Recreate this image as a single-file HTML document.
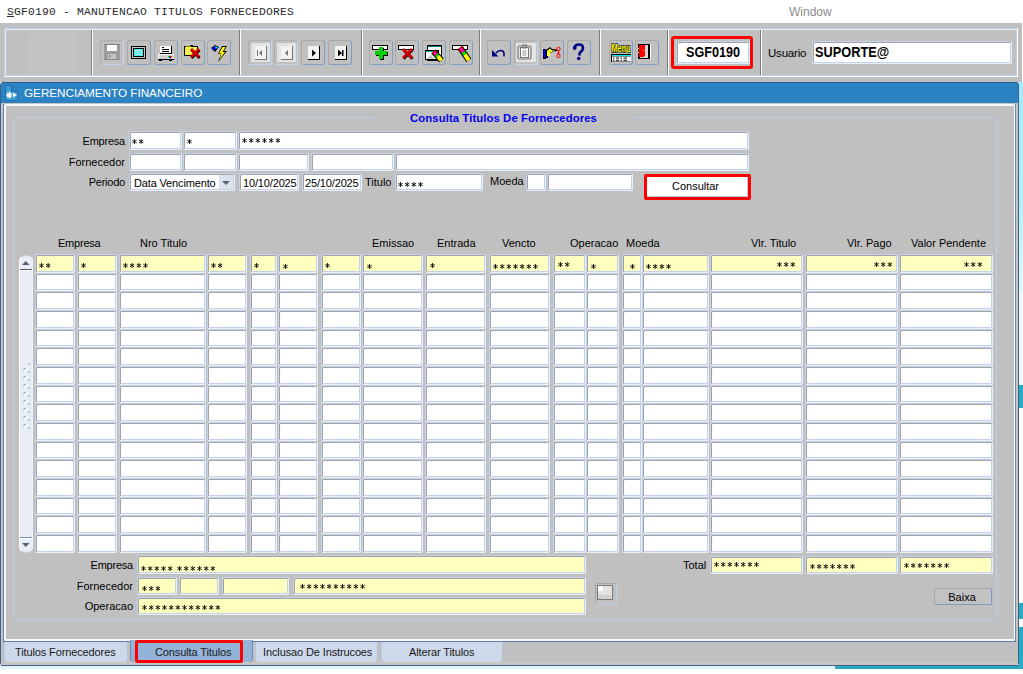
<!DOCTYPE html><html><head><meta charset="utf-8"><style>
*{margin:0;padding:0;box-sizing:border-box}
html,body{width:1023px;height:674px;overflow:hidden;background:#fff;position:relative}
div,svg{position:absolute}
.t{font-family:"Liberation Sans",sans-serif;font-size:11px;color:#000;white-space:nowrap;line-height:13px}
.s{overflow:visible}
.f{background:#fff;border-style:solid;border-width:1px;border-color:#c3d3eb #e9eef7 #e9eef7 #c3d3eb;border-radius:2px;box-shadow:inset 1px 1px 0 #a3a3a3,inset -1px -1px 0 #c3d3eb}
.f.y{background:#ffffc0}
.tb{width:24px;height:25px;border:1px solid;border-color:#a8a8a8 #7f9fc6 #7f9fc6 #a8a8a8;border-radius:3px}
.tb.dis{border-color:#adadad #c2d4ee #c2d4ee #adadad}
.sep{width:2px;background:linear-gradient(90deg,#7c7c7c 0,#7c7c7c 1px,#fff 1px,#fff 2px)}
.btn{border:1px solid;border-color:#a6a6a6 #7f9cc0 #7f9cc0 #a6a6a6;border-radius:2px;background:#c2c2c2}
</style></head><body>
<svg width="0" height="0" style="position:absolute"><defs><g id="ast"><path d="M2.5 0 V5 M0.3 1.2 L4.7 3.8 M0.3 3.8 L4.7 1.2" stroke="#000" stroke-width="0.85" fill="none"/></g></defs></svg>
<div class="t" style="left:7px;top:5px;font-family:'Liberation Mono',monospace;font-size:11.3px;letter-spacing:0.22px;line-height:14px;color:#2a2a2a"><u>S</u>GF0190 - MANUTENCAO TITULOS FORNECEDORES</div>
<div class="t" style="left:789px;top:5px;font-size:12px;color:#8c8c8c;line-height:14px">Window</div>
<div style="left:0px;top:23px;width:1022px;height:59px;background:#c0c0c0"></div>
<div style="left:4px;top:28px;width:1014px;height:49px;border-style:solid;border-width:1px;border-color:#bcd0ec #fff #fff #bcd0ec"></div>
<div style="left:5px;top:29px;width:1012px;height:47px;border-style:solid;border-width:1px;border-color:#e8eef8 #bcd0ec #bcd0ec #e8eef8"></div>
<div style="left:28px;top:33px;width:49px;height:42px;background:#c3c3c3"></div>
<div class="sep" style="left:91px;top:30px;height:45px"></div>
<div class="sep" style="left:239px;top:30px;height:45px"></div>
<div class="sep" style="left:361px;top:30px;height:45px"></div>
<div class="sep" style="left:479px;top:30px;height:45px"></div>
<div class="sep" style="left:599px;top:30px;height:45px"></div>
<div class="sep" style="left:667px;top:30px;height:45px"></div>
<div class="sep" style="left:760px;top:30px;height:45px"></div>
<div class="tb dis" style="left:100px;top:40px"><svg style="left:-1px;top:-1px" width="24" height="25" shape-rendering="crispEdges"><rect x="4" y="4" width="16" height="16" fill="#9c9c9c"/><rect x="5" y="4" width="14" height="1" fill="#7d7d7d"/><rect x="7" y="5" width="10" height="6" fill="#fff"/><rect x="8" y="14" width="8" height="6" fill="#c2c2c2"/><rect x="9" y="15" width="2" height="3" fill="#9c9c9c"/><rect x="4" y="19" width="16" height="1" fill="#8a8a8a"/></svg></div>
<div class="tb" style="left:127px;top:40px"><svg style="left:-1px;top:-1px" width="24" height="25" shape-rendering="crispEdges"><rect x="4" y="6" width="15" height="13" fill="#000"/><rect x="5" y="7" width="13" height="11" fill="#c8c8c8"/><rect x="6" y="8" width="11" height="9" fill="#000"/><rect x="7" y="9" width="9" height="7" fill="#3ef0f0"/><rect x="8" y="10" width="7" height="1" fill="#b8e8e8"/><rect x="8" y="12" width="7" height="1" fill="#b8e8e8"/><rect x="8" y="14" width="7" height="1" fill="#b8e8e8"/></svg></div>
<div class="tb" style="left:154px;top:40px"><svg style="left:-1px;top:-1px" width="24" height="25" shape-rendering="crispEdges"><rect x="6" y="6" width="12" height="8" fill="#000"/><rect x="6" y="6" width="11" height="7" fill="#fff"/><rect x="8" y="7" width="2" height="1" fill="#000"/><rect x="8" y="9" width="7" height="1" fill="#000"/><rect x="8" y="11" width="7" height="1" fill="#000"/><rect x="4" y="14" width="16" height="6" fill="#fff"/><rect x="5" y="15" width="15" height="4" fill="#d0d0d0"/><rect x="14" y="16" width="2" height="1" fill="#0c0"/><rect x="16" y="16" width="2" height="1" fill="#e00"/><rect x="18" y="16" width="1" height="1" fill="#ee0"/><rect x="15" y="17" width="2" height="1" fill="#00f"/><rect x="4" y="19" width="16" height="1" fill="#000"/><rect x="5" y="20" width="3" height="1" fill="#000"/><rect x="15" y="20" width="3" height="1" fill="#000"/></svg></div>
<div class="tb" style="left:181px;top:40px"><svg style="left:-1px;top:-1px" width="24" height="25" shape-rendering="crispEdges"><path d="M3 6 H8 L9 5 H11 L12 6 H17 V16 H3 Z" fill="#000"/><rect x="4" y="7" width="12" height="8" fill="#f2f24a"/><rect x="5" y="6" width="5" height="1" fill="#8a8a00"/></svg><svg style="left:-1px;top:-1px" width="24" height="25"><path d="M9 10 L11 8 L14 11 L17 8 L19 10 L16 13 L19 16 L17 18 L14 15 L11 18 L9 16 L12 13 Z" fill="#000" transform="translate(0.6,1)"/><path d="M9 10 L11 8 L14 11 L17 8 L19 10 L16 13 L19 16 L17 18 L14 15 L11 18 L9 16 L12 13 Z" fill="#d40000"/></svg></div>
<div class="tb" style="left:207px;top:40px"><svg style="left:-1px;top:-1px" width="24" height="25"><path d="M4 8 L8 5 L12 7 L8 12 Z" fill="#000"/><path d="M5 8 L8 6 L10 7 L7 11 Z" fill="#0000f0"/><path d="M8 6 L11 7 L9 9 Z" fill="#00e8f0"/><path d="M15 6 H20 L17 11 H20 L11 22 L14 14 H11 Z" fill="#000"/><path d="M15.5 7 H18.5 L15.5 12 H18 L12.5 19.5 L14.5 13.5 H12 Z" fill="#ffff00"/></svg></div>
<div class="tb dis" style="left:248px;top:40px"><svg style="left:-1px;top:-1px" width="24" height="25"><rect x="3" y="3" width="19" height="19" fill="#e2e2e2"/><rect x="7" y="6" width="12" height="14" fill="#777"/><rect x="7" y="6" width="11" height="13" fill="#f2f2f2"/><rect x="9" y="10" width="1" height="6" fill="#777"/><path d="M11 13 L14 10 V16 Z" fill="#777"/></svg></div>
<div class="tb dis" style="left:274px;top:40px"><svg style="left:-1px;top:-1px" width="24" height="25"><rect x="3" y="3" width="19" height="19" fill="#e2e2e2"/><rect x="7" y="6" width="12" height="14" fill="#777"/><rect x="7" y="6" width="11" height="13" fill="#f2f2f2"/><path d="M11 13 L14 10 V16 Z" fill="#777"/></svg></div>
<div class="tb" style="left:301px;top:40px"><svg style="left:-1px;top:-1px" width="24" height="25"><rect x="7" y="6" width="12" height="14" fill="#000"/><rect x="7" y="6" width="11" height="13" fill="#f2f2f2"/><path d="M11 9.5 L15 13 L11 16.5 Z" fill="#000"/></svg></div>
<div class="tb" style="left:328px;top:40px"><svg style="left:-1px;top:-1px" width="24" height="25"><rect x="7" y="6" width="12" height="14" fill="#000"/><rect x="7" y="6" width="11" height="13" fill="#f2f2f2"/><path d="M10 9.5 L14 13 L10 16.5 Z" fill="#000"/><rect x="14" y="10" width="1.5" height="6" fill="#000"/></svg></div>
<div class="tb" style="left:369px;top:40px"><svg style="left:-1px;top:-1px" width="24" height="25" shape-rendering="crispEdges"><rect x="3" y="5" width="16" height="5" fill="#000"/><rect x="4" y="6" width="14" height="3" fill="#fff"/><path d="M9.5 7 H13.5 V11 H17.5 V15 H13.5 V19 H9.5 V15 H5.5 V11 H9.5 Z" fill="#000" transform="translate(1,1)"/><path d="M9.5 7 H13.5 V11 H17.5 V15 H13.5 V19 H9.5 V15 H5.5 V11 H9.5 Z" fill="#00d000"/></svg></div>
<div class="tb" style="left:395px;top:40px"><svg style="left:-1px;top:-1px" width="24" height="25" shape-rendering="crispEdges"><rect x="3" y="5" width="16" height="5" fill="#000"/><rect x="4" y="6" width="14" height="3" fill="#fff"/></svg><svg style="left:-1px;top:-1px" width="24" height="25"><path d="M7 10 L9 8 L12.5 11.5 L16 8 L18 10 L14.5 13.5 L18 17 L16 19 L12.5 15.5 L9 19 L7 17 L10.5 13.5 Z" fill="#000" transform="translate(0.5,0.8)"/><path d="M7 10 L9 8 L12.5 11.5 L16 8 L18 10 L14.5 13.5 L18 17 L16 19 L12.5 15.5 L9 19 L7 17 L10.5 13.5 Z" fill="#d00000"/></svg></div>
<div class="tb" style="left:422px;top:40px"><svg style="left:-1px;top:-1px" width="24" height="25" shape-rendering="crispEdges"><rect x="5" y="5" width="15" height="16" fill="#000"/><rect x="6" y="7" width="13" height="13" fill="#fff"/><rect x="6" y="6" width="13" height="1" fill="#008080"/><rect x="3" y="10" width="14" height="10" fill="#000"/><rect x="4" y="12" width="12" height="7" fill="#fff"/><rect x="4" y="11" width="12" height="1" fill="#00a0a0"/><path d="M4 19 L9 14 L12 19 Z" fill="#c8c8c8"/></svg><svg style="left:-1px;top:-1px" width="24" height="25"><path d="M11.5 11.5 L19.5 20.5" stroke="#000" stroke-width="6"/><path d="M11.5 11.5 L14.3 14.65" stroke="#f00" stroke-width="4"/><path d="M12.3 12.3 L14.3 14.65" stroke="#f0f" stroke-width="2"/><path d="M14.3 14.65 L15.9 16.45" stroke="#00e000" stroke-width="4"/><path d="M15.9 16.45 L19.5 20.5" stroke="#ffff00" stroke-width="4"/></svg></div>
<div class="tb" style="left:449px;top:40px"><svg style="left:-1px;top:-1px" width="24" height="25" shape-rendering="crispEdges"><rect x="3" y="5" width="16" height="5" fill="#000"/><rect x="4" y="6" width="14" height="3" fill="#fff"/></svg><svg style="left:-1px;top:-1px" width="24" height="25"><path d="M11 7.5 L20 20.5" stroke="#000" stroke-width="6"/><path d="M11 7.5 L14.15 12.05" stroke="#f00" stroke-width="4"/><path d="M11.8 8.3 L14.15 12.05" stroke="#f0f" stroke-width="2"/><path d="M14.15 12.05 L15.95 14.65" stroke="#00e000" stroke-width="4"/><path d="M15.95 14.65 L20 20.5" stroke="#ffff00" stroke-width="4"/></svg></div>
<div class="tb" style="left:487px;top:40px"><svg style="left:-1px;top:-1px" width="24" height="25"><path d="M9 13 Q11 10.5 13.5 10.5 Q17 10.5 17 14 V16.5" fill="none" stroke="#000080" stroke-width="1.6"/><path d="M5 10 L5 16.5 L11.5 16.5 Z" fill="#000080"/></svg></div>
<div class="tb dis" style="left:514px;top:40px"><svg style="left:-1px;top:-1px" width="24" height="25"><rect x="2" y="3" width="20" height="19" fill="#e4e4e4"/><rect x="4" y="6" width="13" height="13" fill="none" stroke="#777" stroke-width="1.2" rx="1.5"/><rect x="6.5" y="7.5" width="8" height="10" fill="#fff" stroke="#777" stroke-width="1"/><rect x="8.5" y="5" width="4" height="3" fill="none" stroke="#777" stroke-width="1"/><path d="M8.5 11 H12.5 M8.5 13 H12.5 M8.5 15 H12.5" stroke="#888" stroke-width="0.9"/></svg></div>
<div class="tb" style="left:540px;top:40px"><svg style="left:-1px;top:-1px" width="24" height="25"><rect x="3" y="9" width="3" height="10" fill="#000"/><rect x="3.5" y="9.5" width="2" height="8" fill="#0000ff"/><path d="M6 10 L10 7 L12 9 L17 9.5 V11 L12 11.5 V13 H10 V14 H9 V15 H8 V18 H6 Z" fill="#000"/><path d="M7 11 L10 8.5 L11.5 10 L16 10.2 L12 10.8 V12.5 H10 V16 H7 Z" fill="#ffff30"/><circle cx="18.5" cy="9" r="1.7" fill="none" stroke="#f00" stroke-width="1"/><circle cx="18.5" cy="16" r="1.7" fill="none" stroke="#f00" stroke-width="1"/><path d="M18 10.5 L19.5 14.5 M19 10.5 L17.5 14.5" stroke="#f00" stroke-width="0.9"/></svg></div>
<div class="tb" style="left:567px;top:40px"><svg style="left:-1px;top:-1px" width="24" height="25"><path d="M7.5 8.5 Q7.5 4.5 12 4.5 Q16 4.5 16 8 Q16 10.5 13 12.5 L12 15.5" fill="none" stroke="#00008a" stroke-width="2.6"/><circle cx="7.7" cy="8" r="1.9" fill="#00008a"/><circle cx="11.7" cy="18.5" r="1.8" fill="#00008a"/></svg></div>
<div class="tb" style="left:609px;top:40px"><svg style="left:-1px;top:-1px" width="24" height="25"><text x="2.5" y="12.3" font-family="Liberation Sans" font-weight="bold" font-size="10" fill="#ffff00" stroke="#000" stroke-width="1.3" paint-order="stroke" textLength="19" lengthAdjust="spacingAndGlyphs">Menu</text><rect x="2" y="14" width="20" height="8" fill="#000"/><rect x="3" y="15" width="19" height="1.2" fill="#00f0f0"/><rect x="3" y="16.5" width="19" height="5" fill="#fff"/><path d="M4 18 H5.5 M7 18 H10 M11.5 18 H13 M14.5 18 H18 M4 20.3 H5.5 M7 20.3 H10 M11.5 20.3 H13 M14.5 20.3 H18" stroke="#000" stroke-width="1.1"/></svg></div>
<div class="tb" style="left:635px;top:40px"><svg style="left:-1px;top:-1px" width="24" height="25" shape-rendering="crispEdges"><rect x="4" y="4" width="12" height="15" fill="#fff"/><rect x="3" y="4" width="12" height="15" fill="#000"/><rect x="5" y="5" width="8" height="13" fill="#d8d8d8"/><path d="M4 5 H10 V15 L8 17 H4 Z" fill="#ff0000"/><rect x="8" y="10" width="1" height="1" fill="#ff0"/><rect x="3" y="8" width="1" height="1" fill="#ff0"/><rect x="3" y="12" width="1" height="1" fill="#ff0"/></svg></div>
<div style="left:671px;top:36px;width:82px;height:33px;border:3px solid #f00;border-radius:3px"></div>
<div class="f" style="left:676px;top:41px;width:74px;height:23px"></div>
<div class="t" style="left:686px;top:44px;font-size:14px;font-weight:bold;line-height:16px;transform:scaleX(0.9);transform-origin:0 0">SGF0190</div>
<div class="t" style="left:768px;top:46px;font-size:11.5px;line-height:14px;letter-spacing:-0.2px">Usuario</div>
<div class="f" style="left:812px;top:41px;width:200px;height:23px"></div>
<div class="t" style="left:815px;top:44px;font-size:14.5px;font-weight:bold;line-height:17px;transform:scaleX(0.88);transform-origin:0 0">SUPORTE@</div>
<div style="left:1015px;top:82px;width:8px;height:30px;background:#a6ecf8"></div>
<div style="left:1015px;top:112px;width:8px;height:180px;background:linear-gradient(#aaedf8,#b4eff9 50%,#e4f7fb)"></div>
<div style="left:1015px;top:292px;width:8px;height:93px;background:#f0f9fc"></div>
<div style="left:1019px;top:385px;width:4px;height:23px;background:#2aa9c3"></div>
<div style="left:1019px;top:603px;width:4px;height:16px;background:#2aa9c3"></div>
<div style="left:1019px;top:627px;width:4px;height:42px;background:#2aa9c3"></div>
<div style="left:835px;top:665px;width:188px;height:4px;background:#2aa9c3"></div>
<div style="left:0px;top:666px;width:835px;height:3px;background:#e0f6fa"></div>
<div style="left:0px;top:82px;width:1019px;height:584px;background:#c0c0c0;border:1px solid #3f5f8f;border-radius:3px"></div>
<div style="left:1px;top:82px;width:1017px;height:21px;background:#2c83c4;border-top:1px solid #2a5d98;border-radius:3px 3px 0 0"></div>
<svg style="left:5px;top:85px" width="14" height="16"><path d="M0.5 0.5 H6.5 V6.5 H12.5 V15.5 H0.5 Z" fill="#3d9ad9" stroke="#2470ae"/><path d="M8.5 1.5 L12 5 H8.5 Z" fill="#3d9ad9" stroke="#2470ae" stroke-width="0.8"/><circle cx="4.5" cy="10" r="2.6" fill="#fff"/><circle cx="4.5" cy="10" r="0.9" fill="#3d9ad9"/><path d="M4.5 6.5 V13.5 M1 10 H8 M2 7.5 L7 12.5 M2 12.5 L7 7.5" stroke="#fff" stroke-width="1"/><rect x="6.5" y="6.8" width="1" height="7" fill="#3d9ad9"/><path d="M8 7.5 L12 10 L8 12.5 Z" fill="#fff"/></svg>
<div class="t" style="left:24px;top:86px;font-size:11.7px;color:#fff;line-height:14px">GERENCIAMENTO FINANCEIRO</div>
<div style="left:1px;top:103px;width:1017px;height:562px;background:#c8c6c2"></div>
<div style="left:3px;top:103px;width:1013px;height:539px;background:#c0c0c0;border-style:solid;border-width:1px;border-color:#c8c6c2 #6a8ab4 #6a8ab4 #5d7fae;border-radius:3px 0 0 0"></div>
<div style="left:4px;top:104px;width:1011px;height:537px;border-style:solid;border-width:2px 1px 2px 2px;border-color:#f6f8fc;border-radius:2px"></div>
<div style="left:13px;top:117px;width:984px;height:504px;border:1px solid #bcd0ec;border-radius:5px"></div>
<div style="left:375px;top:112px;width:259px;height:10px;background:#c0c0c0"></div>
<div class="t" style="left:410px;top:112px;font-size:11.3px;font-weight:bold;color:#0000f0;line-height:13px;letter-spacing:0.1px">Consulta Titulos De Fornecedores</div>
<div class="t" style="left:-75px;width:200px;text-align:right;top:135px;letter-spacing:-0.22px">Empresa</div>
<div class="f" style="left:129px;top:131px;width:53px;height:19px"></div>
<div class="f" style="left:183px;top:131px;width:54px;height:19px"></div>
<div class="f" style="left:238px;top:131px;width:511px;height:19px"></div>
<svg class="s" style="left:132px;top:139px" width="16" height="6"><use href="#ast" x="0.00"/><use href="#ast" x="6.67"/></svg>
<svg class="s" style="left:187px;top:139px" width="9" height="6"><use href="#ast" x="0.00"/></svg>
<svg class="s" style="left:242px;top:138px" width="43" height="6"><use href="#ast" x="0.00"/><use href="#ast" x="6.67"/><use href="#ast" x="13.34"/><use href="#ast" x="20.01"/><use href="#ast" x="26.68"/><use href="#ast" x="33.35"/></svg>
<div class="t" style="left:-75px;width:200px;text-align:right;top:156px;">Fornecedor</div>
<div class="f" style="left:129px;top:153px;width:53px;height:18px"></div>
<div class="f" style="left:183px;top:153px;width:54px;height:18px"></div>
<div class="f" style="left:238px;top:153px;width:71px;height:18px"></div>
<div class="f" style="left:311px;top:153px;width:83px;height:18px"></div>
<div class="f" style="left:395px;top:153px;width:354px;height:18px"></div>
<div class="t" style="left:-75px;width:200px;text-align:right;top:176px;letter-spacing:-0.22px">Periodo</div>
<div class="f" style="left:129px;top:173px;width:106px;height:18px"></div>
<div style="left:219px;top:175px;width:14px;height:14px;background:#dde3ec"></div>
<svg style="left:222px;top:181px" width="9" height="5"><path d="M0 0 H8 L4 4 Z" fill="#5d6478"/></svg>
<div class="t" style="left:134px;top:177px;letter-spacing:-0.15px">Data Vencimento</div>
<div class="f" style="left:239px;top:173px;width:60px;height:18px"></div>
<div class="t" style="left:243px;top:177px;letter-spacing:-0.15px">10/10/2025</div>
<div class="f" style="left:302px;top:173px;width:60px;height:18px"></div>
<div class="t" style="left:305px;top:177px;letter-spacing:-0.15px">25/10/2025</div>
<div class="t" style="left:365px;top:176px;">Titulo</div>
<div class="f" style="left:395px;top:173px;width:88px;height:18px"></div>
<svg class="s" style="left:398px;top:182px" width="29" height="6"><use href="#ast" x="0.00"/><use href="#ast" x="6.67"/><use href="#ast" x="13.34"/><use href="#ast" x="20.01"/></svg>
<div class="t" style="left:490px;top:175px;">Moeda</div>
<div class="f" style="left:526px;top:173px;width:20px;height:18px"></div>
<div class="f" style="left:547px;top:173px;width:86px;height:18px"></div>
<div style="left:644px;top:174px;width:107px;height:26px;border:3px solid #f00;border-radius:2px;background:#fff"></div>
<div style="left:647px;top:177px;width:101px;height:20px;border-right:1px solid #b8c8e0;border-bottom:1px solid #b8c8e0"></div>
<div class="t" style="left:645px;top:180px;width:101px;text-align:center">Consultar</div>
<div class="t" style="left:58px;top:237px;letter-spacing:-0.22px">Empresa</div>
<div class="t" style="left:140px;top:237px;">Nro Titulo</div>
<div class="t" style="left:372px;top:237px;">Emissao</div>
<div class="t" style="left:437px;top:237px;">Entrada</div>
<div class="t" style="left:502px;top:237px;">Vencto</div>
<div class="t" style="left:570px;top:237px;">Operacao</div>
<div class="t" style="left:626px;top:237px;">Moeda</div>
<div class="t" style="left:751px;top:237px;">Vlr. Titulo</div>
<div class="t" style="left:847px;top:237px;">Vlr. Pago</div>
<div class="t" style="left:911px;top:237px;">Valor Pendente</div>
<div class="f y" style="left:35px;top:254px;width:40px;height:19px"></div>
<div class="f y" style="left:77px;top:254px;width:40px;height:19px"></div>
<div class="f y" style="left:119px;top:254px;width:87px;height:19px"></div>
<div class="f y" style="left:207px;top:254px;width:40px;height:19px"></div>
<div class="f y" style="left:250px;top:254px;width:27px;height:19px"></div>
<div class="f y" style="left:278px;top:254px;width:40px;height:19px"></div>
<div class="f y" style="left:321px;top:254px;width:40px;height:19px"></div>
<div class="f y" style="left:362px;top:254px;width:61px;height:19px"></div>
<div class="f y" style="left:425px;top:254px;width:61px;height:19px"></div>
<div class="f y" style="left:489px;top:254px;width:61px;height:19px"></div>
<div class="f y" style="left:553px;top:254px;width:33px;height:19px"></div>
<div class="f y" style="left:586px;top:254px;width:33px;height:19px"></div>
<div class="f y" style="left:622px;top:254px;width:20px;height:19px"></div>
<div class="f y" style="left:642px;top:254px;width:67px;height:19px"></div>
<div class="f y" style="left:710px;top:254px;width:93px;height:19px"></div>
<div class="f y" style="left:805px;top:254px;width:93px;height:19px"></div>
<div class="f y" style="left:899px;top:254px;width:94px;height:19px"></div>
<div class="f" style="left:35px;top:273px;width:40px;height:18px"></div>
<div class="f" style="left:77px;top:273px;width:40px;height:18px"></div>
<div class="f" style="left:119px;top:273px;width:87px;height:18px"></div>
<div class="f" style="left:207px;top:273px;width:40px;height:18px"></div>
<div class="f" style="left:250px;top:273px;width:27px;height:18px"></div>
<div class="f" style="left:278px;top:273px;width:40px;height:18px"></div>
<div class="f" style="left:321px;top:273px;width:40px;height:18px"></div>
<div class="f" style="left:362px;top:273px;width:61px;height:18px"></div>
<div class="f" style="left:425px;top:273px;width:61px;height:18px"></div>
<div class="f" style="left:489px;top:273px;width:61px;height:18px"></div>
<div class="f" style="left:553px;top:273px;width:33px;height:18px"></div>
<div class="f" style="left:586px;top:273px;width:33px;height:18px"></div>
<div class="f" style="left:622px;top:273px;width:20px;height:18px"></div>
<div class="f" style="left:642px;top:273px;width:67px;height:18px"></div>
<div class="f" style="left:710px;top:273px;width:93px;height:18px"></div>
<div class="f" style="left:805px;top:273px;width:93px;height:18px"></div>
<div class="f" style="left:899px;top:273px;width:94px;height:18px"></div>
<div class="f" style="left:35px;top:291px;width:40px;height:19px"></div>
<div class="f" style="left:77px;top:291px;width:40px;height:19px"></div>
<div class="f" style="left:119px;top:291px;width:87px;height:19px"></div>
<div class="f" style="left:207px;top:291px;width:40px;height:19px"></div>
<div class="f" style="left:250px;top:291px;width:27px;height:19px"></div>
<div class="f" style="left:278px;top:291px;width:40px;height:19px"></div>
<div class="f" style="left:321px;top:291px;width:40px;height:19px"></div>
<div class="f" style="left:362px;top:291px;width:61px;height:19px"></div>
<div class="f" style="left:425px;top:291px;width:61px;height:19px"></div>
<div class="f" style="left:489px;top:291px;width:61px;height:19px"></div>
<div class="f" style="left:553px;top:291px;width:33px;height:19px"></div>
<div class="f" style="left:586px;top:291px;width:33px;height:19px"></div>
<div class="f" style="left:622px;top:291px;width:20px;height:19px"></div>
<div class="f" style="left:642px;top:291px;width:67px;height:19px"></div>
<div class="f" style="left:710px;top:291px;width:93px;height:19px"></div>
<div class="f" style="left:805px;top:291px;width:93px;height:19px"></div>
<div class="f" style="left:899px;top:291px;width:94px;height:19px"></div>
<div class="f" style="left:35px;top:310px;width:40px;height:19px"></div>
<div class="f" style="left:77px;top:310px;width:40px;height:19px"></div>
<div class="f" style="left:119px;top:310px;width:87px;height:19px"></div>
<div class="f" style="left:207px;top:310px;width:40px;height:19px"></div>
<div class="f" style="left:250px;top:310px;width:27px;height:19px"></div>
<div class="f" style="left:278px;top:310px;width:40px;height:19px"></div>
<div class="f" style="left:321px;top:310px;width:40px;height:19px"></div>
<div class="f" style="left:362px;top:310px;width:61px;height:19px"></div>
<div class="f" style="left:425px;top:310px;width:61px;height:19px"></div>
<div class="f" style="left:489px;top:310px;width:61px;height:19px"></div>
<div class="f" style="left:553px;top:310px;width:33px;height:19px"></div>
<div class="f" style="left:586px;top:310px;width:33px;height:19px"></div>
<div class="f" style="left:622px;top:310px;width:20px;height:19px"></div>
<div class="f" style="left:642px;top:310px;width:67px;height:19px"></div>
<div class="f" style="left:710px;top:310px;width:93px;height:19px"></div>
<div class="f" style="left:805px;top:310px;width:93px;height:19px"></div>
<div class="f" style="left:899px;top:310px;width:94px;height:19px"></div>
<div class="f" style="left:35px;top:329px;width:40px;height:18px"></div>
<div class="f" style="left:77px;top:329px;width:40px;height:18px"></div>
<div class="f" style="left:119px;top:329px;width:87px;height:18px"></div>
<div class="f" style="left:207px;top:329px;width:40px;height:18px"></div>
<div class="f" style="left:250px;top:329px;width:27px;height:18px"></div>
<div class="f" style="left:278px;top:329px;width:40px;height:18px"></div>
<div class="f" style="left:321px;top:329px;width:40px;height:18px"></div>
<div class="f" style="left:362px;top:329px;width:61px;height:18px"></div>
<div class="f" style="left:425px;top:329px;width:61px;height:18px"></div>
<div class="f" style="left:489px;top:329px;width:61px;height:18px"></div>
<div class="f" style="left:553px;top:329px;width:33px;height:18px"></div>
<div class="f" style="left:586px;top:329px;width:33px;height:18px"></div>
<div class="f" style="left:622px;top:329px;width:20px;height:18px"></div>
<div class="f" style="left:642px;top:329px;width:67px;height:18px"></div>
<div class="f" style="left:710px;top:329px;width:93px;height:18px"></div>
<div class="f" style="left:805px;top:329px;width:93px;height:18px"></div>
<div class="f" style="left:899px;top:329px;width:94px;height:18px"></div>
<div class="f" style="left:35px;top:347px;width:40px;height:19px"></div>
<div class="f" style="left:77px;top:347px;width:40px;height:19px"></div>
<div class="f" style="left:119px;top:347px;width:87px;height:19px"></div>
<div class="f" style="left:207px;top:347px;width:40px;height:19px"></div>
<div class="f" style="left:250px;top:347px;width:27px;height:19px"></div>
<div class="f" style="left:278px;top:347px;width:40px;height:19px"></div>
<div class="f" style="left:321px;top:347px;width:40px;height:19px"></div>
<div class="f" style="left:362px;top:347px;width:61px;height:19px"></div>
<div class="f" style="left:425px;top:347px;width:61px;height:19px"></div>
<div class="f" style="left:489px;top:347px;width:61px;height:19px"></div>
<div class="f" style="left:553px;top:347px;width:33px;height:19px"></div>
<div class="f" style="left:586px;top:347px;width:33px;height:19px"></div>
<div class="f" style="left:622px;top:347px;width:20px;height:19px"></div>
<div class="f" style="left:642px;top:347px;width:67px;height:19px"></div>
<div class="f" style="left:710px;top:347px;width:93px;height:19px"></div>
<div class="f" style="left:805px;top:347px;width:93px;height:19px"></div>
<div class="f" style="left:899px;top:347px;width:94px;height:19px"></div>
<div class="f" style="left:35px;top:366px;width:40px;height:19px"></div>
<div class="f" style="left:77px;top:366px;width:40px;height:19px"></div>
<div class="f" style="left:119px;top:366px;width:87px;height:19px"></div>
<div class="f" style="left:207px;top:366px;width:40px;height:19px"></div>
<div class="f" style="left:250px;top:366px;width:27px;height:19px"></div>
<div class="f" style="left:278px;top:366px;width:40px;height:19px"></div>
<div class="f" style="left:321px;top:366px;width:40px;height:19px"></div>
<div class="f" style="left:362px;top:366px;width:61px;height:19px"></div>
<div class="f" style="left:425px;top:366px;width:61px;height:19px"></div>
<div class="f" style="left:489px;top:366px;width:61px;height:19px"></div>
<div class="f" style="left:553px;top:366px;width:33px;height:19px"></div>
<div class="f" style="left:586px;top:366px;width:33px;height:19px"></div>
<div class="f" style="left:622px;top:366px;width:20px;height:19px"></div>
<div class="f" style="left:642px;top:366px;width:67px;height:19px"></div>
<div class="f" style="left:710px;top:366px;width:93px;height:19px"></div>
<div class="f" style="left:805px;top:366px;width:93px;height:19px"></div>
<div class="f" style="left:899px;top:366px;width:94px;height:19px"></div>
<div class="f" style="left:35px;top:385px;width:40px;height:18px"></div>
<div class="f" style="left:77px;top:385px;width:40px;height:18px"></div>
<div class="f" style="left:119px;top:385px;width:87px;height:18px"></div>
<div class="f" style="left:207px;top:385px;width:40px;height:18px"></div>
<div class="f" style="left:250px;top:385px;width:27px;height:18px"></div>
<div class="f" style="left:278px;top:385px;width:40px;height:18px"></div>
<div class="f" style="left:321px;top:385px;width:40px;height:18px"></div>
<div class="f" style="left:362px;top:385px;width:61px;height:18px"></div>
<div class="f" style="left:425px;top:385px;width:61px;height:18px"></div>
<div class="f" style="left:489px;top:385px;width:61px;height:18px"></div>
<div class="f" style="left:553px;top:385px;width:33px;height:18px"></div>
<div class="f" style="left:586px;top:385px;width:33px;height:18px"></div>
<div class="f" style="left:622px;top:385px;width:20px;height:18px"></div>
<div class="f" style="left:642px;top:385px;width:67px;height:18px"></div>
<div class="f" style="left:710px;top:385px;width:93px;height:18px"></div>
<div class="f" style="left:805px;top:385px;width:93px;height:18px"></div>
<div class="f" style="left:899px;top:385px;width:94px;height:18px"></div>
<div class="f" style="left:35px;top:403px;width:40px;height:19px"></div>
<div class="f" style="left:77px;top:403px;width:40px;height:19px"></div>
<div class="f" style="left:119px;top:403px;width:87px;height:19px"></div>
<div class="f" style="left:207px;top:403px;width:40px;height:19px"></div>
<div class="f" style="left:250px;top:403px;width:27px;height:19px"></div>
<div class="f" style="left:278px;top:403px;width:40px;height:19px"></div>
<div class="f" style="left:321px;top:403px;width:40px;height:19px"></div>
<div class="f" style="left:362px;top:403px;width:61px;height:19px"></div>
<div class="f" style="left:425px;top:403px;width:61px;height:19px"></div>
<div class="f" style="left:489px;top:403px;width:61px;height:19px"></div>
<div class="f" style="left:553px;top:403px;width:33px;height:19px"></div>
<div class="f" style="left:586px;top:403px;width:33px;height:19px"></div>
<div class="f" style="left:622px;top:403px;width:20px;height:19px"></div>
<div class="f" style="left:642px;top:403px;width:67px;height:19px"></div>
<div class="f" style="left:710px;top:403px;width:93px;height:19px"></div>
<div class="f" style="left:805px;top:403px;width:93px;height:19px"></div>
<div class="f" style="left:899px;top:403px;width:94px;height:19px"></div>
<div class="f" style="left:35px;top:422px;width:40px;height:19px"></div>
<div class="f" style="left:77px;top:422px;width:40px;height:19px"></div>
<div class="f" style="left:119px;top:422px;width:87px;height:19px"></div>
<div class="f" style="left:207px;top:422px;width:40px;height:19px"></div>
<div class="f" style="left:250px;top:422px;width:27px;height:19px"></div>
<div class="f" style="left:278px;top:422px;width:40px;height:19px"></div>
<div class="f" style="left:321px;top:422px;width:40px;height:19px"></div>
<div class="f" style="left:362px;top:422px;width:61px;height:19px"></div>
<div class="f" style="left:425px;top:422px;width:61px;height:19px"></div>
<div class="f" style="left:489px;top:422px;width:61px;height:19px"></div>
<div class="f" style="left:553px;top:422px;width:33px;height:19px"></div>
<div class="f" style="left:586px;top:422px;width:33px;height:19px"></div>
<div class="f" style="left:622px;top:422px;width:20px;height:19px"></div>
<div class="f" style="left:642px;top:422px;width:67px;height:19px"></div>
<div class="f" style="left:710px;top:422px;width:93px;height:19px"></div>
<div class="f" style="left:805px;top:422px;width:93px;height:19px"></div>
<div class="f" style="left:899px;top:422px;width:94px;height:19px"></div>
<div class="f" style="left:35px;top:441px;width:40px;height:18px"></div>
<div class="f" style="left:77px;top:441px;width:40px;height:18px"></div>
<div class="f" style="left:119px;top:441px;width:87px;height:18px"></div>
<div class="f" style="left:207px;top:441px;width:40px;height:18px"></div>
<div class="f" style="left:250px;top:441px;width:27px;height:18px"></div>
<div class="f" style="left:278px;top:441px;width:40px;height:18px"></div>
<div class="f" style="left:321px;top:441px;width:40px;height:18px"></div>
<div class="f" style="left:362px;top:441px;width:61px;height:18px"></div>
<div class="f" style="left:425px;top:441px;width:61px;height:18px"></div>
<div class="f" style="left:489px;top:441px;width:61px;height:18px"></div>
<div class="f" style="left:553px;top:441px;width:33px;height:18px"></div>
<div class="f" style="left:586px;top:441px;width:33px;height:18px"></div>
<div class="f" style="left:622px;top:441px;width:20px;height:18px"></div>
<div class="f" style="left:642px;top:441px;width:67px;height:18px"></div>
<div class="f" style="left:710px;top:441px;width:93px;height:18px"></div>
<div class="f" style="left:805px;top:441px;width:93px;height:18px"></div>
<div class="f" style="left:899px;top:441px;width:94px;height:18px"></div>
<div class="f" style="left:35px;top:459px;width:40px;height:19px"></div>
<div class="f" style="left:77px;top:459px;width:40px;height:19px"></div>
<div class="f" style="left:119px;top:459px;width:87px;height:19px"></div>
<div class="f" style="left:207px;top:459px;width:40px;height:19px"></div>
<div class="f" style="left:250px;top:459px;width:27px;height:19px"></div>
<div class="f" style="left:278px;top:459px;width:40px;height:19px"></div>
<div class="f" style="left:321px;top:459px;width:40px;height:19px"></div>
<div class="f" style="left:362px;top:459px;width:61px;height:19px"></div>
<div class="f" style="left:425px;top:459px;width:61px;height:19px"></div>
<div class="f" style="left:489px;top:459px;width:61px;height:19px"></div>
<div class="f" style="left:553px;top:459px;width:33px;height:19px"></div>
<div class="f" style="left:586px;top:459px;width:33px;height:19px"></div>
<div class="f" style="left:622px;top:459px;width:20px;height:19px"></div>
<div class="f" style="left:642px;top:459px;width:67px;height:19px"></div>
<div class="f" style="left:710px;top:459px;width:93px;height:19px"></div>
<div class="f" style="left:805px;top:459px;width:93px;height:19px"></div>
<div class="f" style="left:899px;top:459px;width:94px;height:19px"></div>
<div class="f" style="left:35px;top:478px;width:40px;height:19px"></div>
<div class="f" style="left:77px;top:478px;width:40px;height:19px"></div>
<div class="f" style="left:119px;top:478px;width:87px;height:19px"></div>
<div class="f" style="left:207px;top:478px;width:40px;height:19px"></div>
<div class="f" style="left:250px;top:478px;width:27px;height:19px"></div>
<div class="f" style="left:278px;top:478px;width:40px;height:19px"></div>
<div class="f" style="left:321px;top:478px;width:40px;height:19px"></div>
<div class="f" style="left:362px;top:478px;width:61px;height:19px"></div>
<div class="f" style="left:425px;top:478px;width:61px;height:19px"></div>
<div class="f" style="left:489px;top:478px;width:61px;height:19px"></div>
<div class="f" style="left:553px;top:478px;width:33px;height:19px"></div>
<div class="f" style="left:586px;top:478px;width:33px;height:19px"></div>
<div class="f" style="left:622px;top:478px;width:20px;height:19px"></div>
<div class="f" style="left:642px;top:478px;width:67px;height:19px"></div>
<div class="f" style="left:710px;top:478px;width:93px;height:19px"></div>
<div class="f" style="left:805px;top:478px;width:93px;height:19px"></div>
<div class="f" style="left:899px;top:478px;width:94px;height:19px"></div>
<div class="f" style="left:35px;top:497px;width:40px;height:18px"></div>
<div class="f" style="left:77px;top:497px;width:40px;height:18px"></div>
<div class="f" style="left:119px;top:497px;width:87px;height:18px"></div>
<div class="f" style="left:207px;top:497px;width:40px;height:18px"></div>
<div class="f" style="left:250px;top:497px;width:27px;height:18px"></div>
<div class="f" style="left:278px;top:497px;width:40px;height:18px"></div>
<div class="f" style="left:321px;top:497px;width:40px;height:18px"></div>
<div class="f" style="left:362px;top:497px;width:61px;height:18px"></div>
<div class="f" style="left:425px;top:497px;width:61px;height:18px"></div>
<div class="f" style="left:489px;top:497px;width:61px;height:18px"></div>
<div class="f" style="left:553px;top:497px;width:33px;height:18px"></div>
<div class="f" style="left:586px;top:497px;width:33px;height:18px"></div>
<div class="f" style="left:622px;top:497px;width:20px;height:18px"></div>
<div class="f" style="left:642px;top:497px;width:67px;height:18px"></div>
<div class="f" style="left:710px;top:497px;width:93px;height:18px"></div>
<div class="f" style="left:805px;top:497px;width:93px;height:18px"></div>
<div class="f" style="left:899px;top:497px;width:94px;height:18px"></div>
<div class="f" style="left:35px;top:515px;width:40px;height:19px"></div>
<div class="f" style="left:77px;top:515px;width:40px;height:19px"></div>
<div class="f" style="left:119px;top:515px;width:87px;height:19px"></div>
<div class="f" style="left:207px;top:515px;width:40px;height:19px"></div>
<div class="f" style="left:250px;top:515px;width:27px;height:19px"></div>
<div class="f" style="left:278px;top:515px;width:40px;height:19px"></div>
<div class="f" style="left:321px;top:515px;width:40px;height:19px"></div>
<div class="f" style="left:362px;top:515px;width:61px;height:19px"></div>
<div class="f" style="left:425px;top:515px;width:61px;height:19px"></div>
<div class="f" style="left:489px;top:515px;width:61px;height:19px"></div>
<div class="f" style="left:553px;top:515px;width:33px;height:19px"></div>
<div class="f" style="left:586px;top:515px;width:33px;height:19px"></div>
<div class="f" style="left:622px;top:515px;width:20px;height:19px"></div>
<div class="f" style="left:642px;top:515px;width:67px;height:19px"></div>
<div class="f" style="left:710px;top:515px;width:93px;height:19px"></div>
<div class="f" style="left:805px;top:515px;width:93px;height:19px"></div>
<div class="f" style="left:899px;top:515px;width:94px;height:19px"></div>
<div class="f" style="left:35px;top:534px;width:40px;height:19px"></div>
<div class="f" style="left:77px;top:534px;width:40px;height:19px"></div>
<div class="f" style="left:119px;top:534px;width:87px;height:19px"></div>
<div class="f" style="left:207px;top:534px;width:40px;height:19px"></div>
<div class="f" style="left:250px;top:534px;width:27px;height:19px"></div>
<div class="f" style="left:278px;top:534px;width:40px;height:19px"></div>
<div class="f" style="left:321px;top:534px;width:40px;height:19px"></div>
<div class="f" style="left:362px;top:534px;width:61px;height:19px"></div>
<div class="f" style="left:425px;top:534px;width:61px;height:19px"></div>
<div class="f" style="left:489px;top:534px;width:61px;height:19px"></div>
<div class="f" style="left:553px;top:534px;width:33px;height:19px"></div>
<div class="f" style="left:586px;top:534px;width:33px;height:19px"></div>
<div class="f" style="left:622px;top:534px;width:20px;height:19px"></div>
<div class="f" style="left:642px;top:534px;width:67px;height:19px"></div>
<div class="f" style="left:710px;top:534px;width:93px;height:19px"></div>
<div class="f" style="left:805px;top:534px;width:93px;height:19px"></div>
<div class="f" style="left:899px;top:534px;width:94px;height:19px"></div>
<svg class="s" style="left:39px;top:263px" width="16" height="6"><use href="#ast" x="0.00"/><use href="#ast" x="6.67"/></svg>
<svg class="s" style="left:81px;top:263px" width="9" height="6"><use href="#ast" x="0.00"/></svg>
<svg class="s" style="left:123px;top:263px" width="29" height="6"><use href="#ast" x="0.00"/><use href="#ast" x="6.67"/><use href="#ast" x="13.34"/><use href="#ast" x="20.01"/></svg>
<svg class="s" style="left:211px;top:263px" width="16" height="6"><use href="#ast" x="0.00"/><use href="#ast" x="6.67"/></svg>
<svg class="s" style="left:254px;top:263px" width="9" height="6"><use href="#ast" x="0.00"/></svg>
<svg class="s" style="left:283px;top:264px" width="9" height="6"><use href="#ast" x="0.00"/></svg>
<svg class="s" style="left:325px;top:263px" width="9" height="6"><use href="#ast" x="0.00"/></svg>
<svg class="s" style="left:367px;top:264px" width="9" height="6"><use href="#ast" x="0.00"/></svg>
<svg class="s" style="left:430px;top:263px" width="9" height="6"><use href="#ast" x="0.00"/></svg>
<svg class="s" style="left:493px;top:264px" width="49" height="6"><use href="#ast" x="0.00"/><use href="#ast" x="6.67"/><use href="#ast" x="13.34"/><use href="#ast" x="20.01"/><use href="#ast" x="26.68"/><use href="#ast" x="33.35"/><use href="#ast" x="40.02"/></svg>
<svg class="s" style="left:558px;top:262px" width="16" height="6"><use href="#ast" x="0.00"/><use href="#ast" x="6.67"/></svg>
<svg class="s" style="left:591px;top:264px" width="9" height="6"><use href="#ast" x="0.00"/></svg>
<svg class="s" style="left:630px;top:264px" width="9" height="6"><use href="#ast" x="0.00"/></svg>
<svg class="s" style="left:646px;top:264px" width="29" height="6"><use href="#ast" x="0.00"/><use href="#ast" x="6.67"/><use href="#ast" x="13.34"/><use href="#ast" x="20.01"/></svg>
<svg class="s" style="left:777px;top:262px" width="23" height="6"><use href="#ast" x="0.00"/><use href="#ast" x="6.67"/><use href="#ast" x="13.34"/></svg>
<svg class="s" style="left:874px;top:262px" width="23" height="6"><use href="#ast" x="0.00"/><use href="#ast" x="6.67"/><use href="#ast" x="13.34"/></svg>
<svg class="s" style="left:964px;top:262px" width="23" height="6"><use href="#ast" x="0.00"/><use href="#ast" x="6.67"/><use href="#ast" x="13.34"/></svg>
<div style="left:19px;top:255px;width:14px;height:298px;background:#e9edf5;border:1px solid #c4d4ec;border-left-color:#fff;border-right-color:#f0f3f8;border-radius:6px"></div>
<div style="left:20px;top:269px;width:12px;height:1px;background:#55596e"></div>
<div style="left:20px;top:270px;width:12px;height:1px;background:#fff"></div>
<div style="left:20px;top:537px;width:12px;height:1px;background:#7490b6"></div>
<div style="left:20px;top:538px;width:12px;height:1px;background:#fff"></div>
<svg style="left:22px;top:261px" width="8" height="5"><path d="M0 4 H7.5 L3.75 0 Z" fill="#5a5e74"/></svg>
<svg style="left:22px;top:543px" width="8" height="5"><path d="M0 0 H7.5 L3.75 4 Z" fill="#5a5e74"/></svg>
<svg style="left:23px;top:363px" width="8" height="70" shape-rendering="crispEdges"><rect x="6" y="0" width="1" height="1" fill="#6f86b0"/><rect x="5" y="1" width="1" height="1" fill="#9fb0cc"/><rect x="6" y="8" width="1" height="1" fill="#6f86b0"/><rect x="5" y="9" width="1" height="1" fill="#9fb0cc"/><rect x="6" y="16" width="1" height="1" fill="#6f86b0"/><rect x="5" y="17" width="1" height="1" fill="#9fb0cc"/><rect x="6" y="24" width="1" height="1" fill="#6f86b0"/><rect x="5" y="25" width="1" height="1" fill="#9fb0cc"/><rect x="6" y="32" width="1" height="1" fill="#6f86b0"/><rect x="5" y="33" width="1" height="1" fill="#9fb0cc"/><rect x="6" y="40" width="1" height="1" fill="#6f86b0"/><rect x="5" y="41" width="1" height="1" fill="#9fb0cc"/><rect x="6" y="48" width="1" height="1" fill="#6f86b0"/><rect x="5" y="49" width="1" height="1" fill="#9fb0cc"/><rect x="6" y="56" width="1" height="1" fill="#6f86b0"/><rect x="5" y="57" width="1" height="1" fill="#9fb0cc"/><rect x="6" y="64" width="1" height="1" fill="#6f86b0"/><rect x="5" y="65" width="1" height="1" fill="#9fb0cc"/><rect x="1" y="5" width="1" height="1" fill="#6f86b0"/><rect x="0" y="6" width="1" height="1" fill="#9fb0cc"/><rect x="1" y="13" width="1" height="1" fill="#6f86b0"/><rect x="0" y="14" width="1" height="1" fill="#9fb0cc"/><rect x="1" y="21" width="1" height="1" fill="#6f86b0"/><rect x="0" y="22" width="1" height="1" fill="#9fb0cc"/><rect x="1" y="29" width="1" height="1" fill="#6f86b0"/><rect x="0" y="30" width="1" height="1" fill="#9fb0cc"/><rect x="1" y="37" width="1" height="1" fill="#6f86b0"/><rect x="0" y="38" width="1" height="1" fill="#9fb0cc"/><rect x="1" y="45" width="1" height="1" fill="#6f86b0"/><rect x="0" y="46" width="1" height="1" fill="#9fb0cc"/><rect x="1" y="53" width="1" height="1" fill="#6f86b0"/><rect x="0" y="54" width="1" height="1" fill="#9fb0cc"/><rect x="1" y="61" width="1" height="1" fill="#6f86b0"/><rect x="0" y="62" width="1" height="1" fill="#9fb0cc"/></svg>
<div class="t" style="left:-67px;width:200px;text-align:right;top:559px;letter-spacing:-0.22px">Empresa</div>
<div class="f y" style="left:137px;top:555px;width:449px;height:19px"></div>
<svg class="s" style="left:141px;top:566px" width="36" height="6"><use href="#ast" x="0.00"/><use href="#ast" x="6.67"/><use href="#ast" x="13.34"/><use href="#ast" x="20.01"/><use href="#ast" x="26.68"/></svg>
<svg class="s" style="left:177px;top:566px" width="43" height="6"><use href="#ast" x="0.00"/><use href="#ast" x="6.67"/><use href="#ast" x="13.34"/><use href="#ast" x="20.01"/><use href="#ast" x="26.68"/><use href="#ast" x="33.35"/></svg>
<div class="t" style="left:-67px;width:200px;text-align:right;top:580px;">Fornecedor</div>
<div class="f y" style="left:137px;top:577px;width:40px;height:18px"></div>
<div class="f y" style="left:179px;top:577px;width:40px;height:18px"></div>
<div class="f y" style="left:222px;top:577px;width:67px;height:18px"></div>
<div class="f y" style="left:293px;top:577px;width:293px;height:18px"></div>
<svg class="s" style="left:142px;top:586px" width="23" height="6"><use href="#ast" x="0.00"/><use href="#ast" x="6.67"/><use href="#ast" x="13.34"/></svg>
<svg class="s" style="left:300px;top:584px" width="69" height="6"><use href="#ast" x="0.00"/><use href="#ast" x="6.67"/><use href="#ast" x="13.34"/><use href="#ast" x="20.01"/><use href="#ast" x="26.68"/><use href="#ast" x="33.35"/><use href="#ast" x="40.02"/><use href="#ast" x="46.69"/><use href="#ast" x="53.36"/><use href="#ast" x="60.03"/></svg>
<div class="t" style="left:-67px;width:200px;text-align:right;top:600px;">Operacao</div>
<div class="f y" style="left:137px;top:597px;width:449px;height:18px"></div>
<svg class="s" style="left:142px;top:605px" width="83" height="6"><use href="#ast" x="0.00"/><use href="#ast" x="6.67"/><use href="#ast" x="13.34"/><use href="#ast" x="20.01"/><use href="#ast" x="26.68"/><use href="#ast" x="33.35"/><use href="#ast" x="40.02"/><use href="#ast" x="46.69"/><use href="#ast" x="53.36"/><use href="#ast" x="60.03"/><use href="#ast" x="66.70"/><use href="#ast" x="73.37"/></svg>
<div style="left:595px;top:583px;width:22px;height:22px;border:1px solid;border-color:#a8a8a8 #bcd0ec #bcd0ec #a8a8a8;border-radius:2px"></div>
<svg style="left:597px;top:585px" width="16" height="15"><rect x="0.5" y="0.5" width="15" height="14" fill="#e2e2e2" stroke="#777"/><rect x="1" y="1" width="5" height="5" fill="#fff"/><path d="M1 11 L4 9 L7 11 L10 9 L14 11 V14 H1Z" fill="#cfcfcf"/></svg>
<div class="t" style="left:683px;top:559px;">Total</div>
<div class="f y" style="left:710px;top:556px;width:93px;height:18px"></div>
<div class="f y" style="left:805px;top:556px;width:93px;height:18px"></div>
<div class="f y" style="left:899px;top:556px;width:94px;height:18px"></div>
<svg class="s" style="left:714px;top:562px" width="49" height="6"><use href="#ast" x="0.00"/><use href="#ast" x="6.67"/><use href="#ast" x="13.34"/><use href="#ast" x="20.01"/><use href="#ast" x="26.68"/><use href="#ast" x="33.35"/><use href="#ast" x="40.02"/></svg>
<svg class="s" style="left:810px;top:564px" width="49" height="6"><use href="#ast" x="0.00"/><use href="#ast" x="6.67"/><use href="#ast" x="13.34"/><use href="#ast" x="20.01"/><use href="#ast" x="26.68"/><use href="#ast" x="33.35"/><use href="#ast" x="40.02"/></svg>
<svg class="s" style="left:904px;top:563px" width="49" height="6"><use href="#ast" x="0.00"/><use href="#ast" x="6.67"/><use href="#ast" x="13.34"/><use href="#ast" x="20.01"/><use href="#ast" x="26.68"/><use href="#ast" x="33.35"/><use href="#ast" x="40.02"/></svg>
<div class="btn" style="left:934px;top:588px;width:58px;height:17px"></div>
<div class="t" style="left:933px;top:591px;width:58px;text-align:center">Baixa</div>
<div style="left:1px;top:641px;width:1017px;height:21px;background:#c0c0c0"></div>
<div style="left:3px;top:641px;width:1013px;height:1px;background:#5d7fae"></div>
<div style="left:1px;top:662px;width:1017px;height:3px;background:#c8c6c2"></div>
<div style="left:1px;top:665px;width:1017px;height:1px;background:#3f5f8f"></div>
<div style="left:4px;top:642px;width:124px;height:20px;background:#cdd9ea;border-radius:0 0 4px 4px;border-left:1px solid #b9c9e0;border-right:1px solid #b4c2d6;"></div>
<div class="t" style="left:15px;top:646px;color:#1a1a1a;letter-spacing:-0.12px">Titulos Fornecedores</div>
<div style="left:130px;top:640px;width:123px;height:22px;background:#93b3d9;border-radius:0 0 4px 4px;border-left:1px solid #6f8fba;border-right:1px solid #6f8fba;"></div>
<div class="t" style="left:155px;top:646px;color:#1a1a1a;letter-spacing:-0.12px">Consulta Titulos</div>
<div style="left:255px;top:642px;width:123px;height:20px;background:#cdd9ea;border-radius:0 0 4px 4px;border-left:1px solid #b9c9e0;border-right:1px solid #b4c2d6;"></div>
<div class="t" style="left:263px;top:646px;color:#1a1a1a;letter-spacing:-0.12px">Inclusao De Instrucoes</div>
<div style="left:381px;top:642px;width:122px;height:20px;background:#cdd9ea;border-radius:0 0 4px 4px;border-left:1px solid #b9c9e0;border-right:1px solid #b4c2d6;"></div>
<div class="t" style="left:409px;top:646px;color:#1a1a1a;letter-spacing:-0.12px">Alterar Titulos</div>
<div style="left:135px;top:640px;width:108px;height:23px;border:3px solid #f00;border-radius:2px"></div>
</body></html>
